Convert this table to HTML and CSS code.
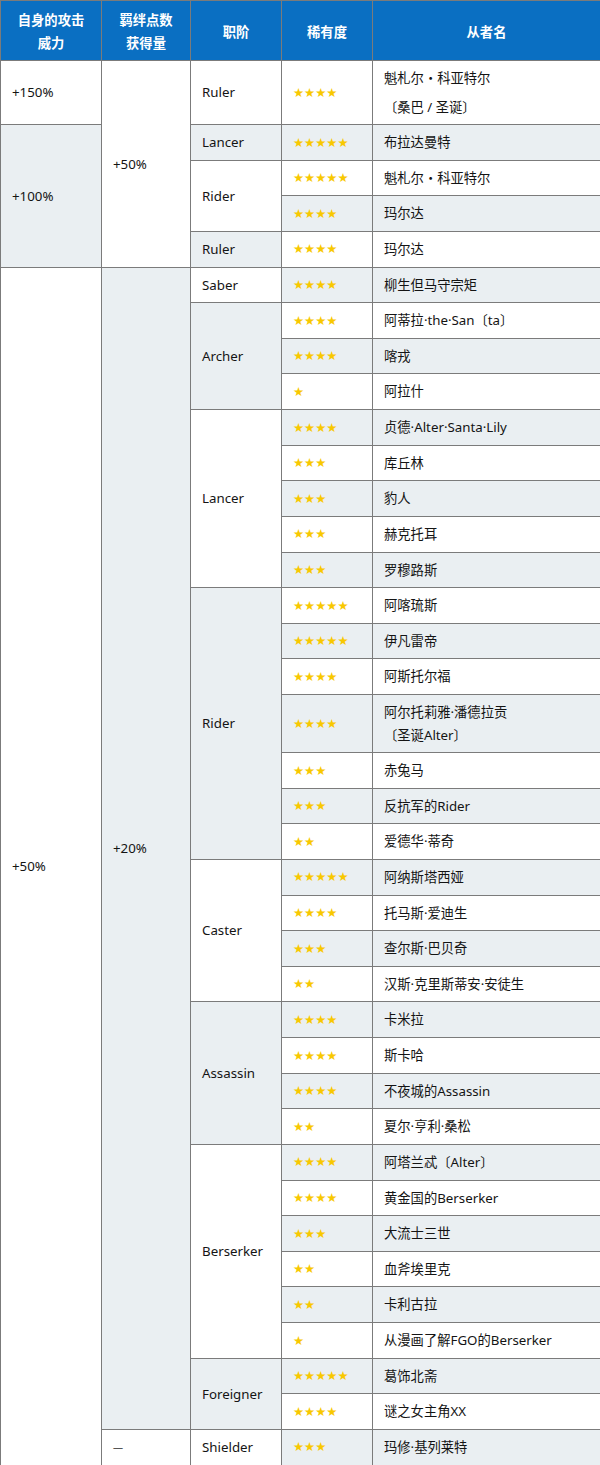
FILE: index.html
```html
<!DOCTYPE html>
<html lang="zh-CN">
<head>
<meta charset="utf-8">
<title>从者表</title>
<link rel="stylesheet" href="styles.css">
</head>
<body>
<table class="tbl">
  <colgroup>
    <col class="c1"><col class="c2"><col class="c3"><col class="c4"><col class="c5">
  </colgroup>
  <thead>
    <tr>
      <th>自身的攻击<br>威力</th>
      <th>羁绊点数<br>获得量</th>
      <th>职阶</th>
      <th>稀有度</th>
      <th>从者名</th>
    </tr>
  </thead>
  <tbody>
    <tr class="tall">
      <td>+150%</td>
      <td rowspan="5">+50%</td>
      <td>Ruler</td>
      <td class="r"><span class="st">★★★★</span></td>
      <td class="n wide">魁札尔・科亚特尔<br>〔桑巴 / 圣诞〕</td>
    </tr>
    <tr>
      <td rowspan="4" class="g">+100%</td>
      <td class="g">Lancer</td>
      <td class="r"><span class="st">★★★★★</span></td>
      <td class="n">布拉达曼特</td>
    </tr>
    <tr>
      <td rowspan="2">Rider</td>
      <td class="r"><span class="st">★★★★★</span></td>
      <td class="n">魁札尔・科亚特尔</td>
    </tr>
    <tr>
      <td class="r"><span class="st">★★★★</span></td>
      <td class="n">玛尔达</td>
    </tr>
    <tr>
      <td class="g">Ruler</td>
      <td class="r"><span class="st">★★★★</span></td>
      <td class="n">玛尔达</td>
    </tr>
    <tr>
      <td rowspan="33">+50%</td>
      <td rowspan="32" class="g">+20%</td>
      <td>Saber</td>
      <td class="r"><span class="st">★★★★</span></td>
      <td class="n">柳生但马守宗矩</td>
    </tr>
    <tr>
      <td rowspan="3" class="g">Archer</td>
      <td class="r"><span class="st">★★★★</span></td>
      <td class="n">阿蒂拉·the·San〔ta〕</td>
    </tr>
    <tr>
      <td class="r"><span class="st">★★★★</span></td>
      <td class="n">喀戎</td>
    </tr>
    <tr>
      <td class="r"><span class="st">★</span></td>
      <td class="n">阿拉什</td>
    </tr>
    <tr>
      <td rowspan="5">Lancer</td>
      <td class="r"><span class="st">★★★★</span></td>
      <td class="n">贞德·Alter·Santa·Lily</td>
    </tr>
    <tr>
      <td class="r"><span class="st">★★★</span></td>
      <td class="n">库丘林</td>
    </tr>
    <tr>
      <td class="r"><span class="st">★★★</span></td>
      <td class="n">豹人</td>
    </tr>
    <tr>
      <td class="r"><span class="st">★★★</span></td>
      <td class="n">赫克托耳</td>
    </tr>
    <tr>
      <td class="r"><span class="st">★★★</span></td>
      <td class="n">罗穆路斯</td>
    </tr>
    <tr>
      <td rowspan="7" class="g">Rider</td>
      <td class="r"><span class="st">★★★★★</span></td>
      <td class="n">阿喀琉斯</td>
    </tr>
    <tr>
      <td class="r"><span class="st">★★★★★</span></td>
      <td class="n">伊凡雷帝</td>
    </tr>
    <tr>
      <td class="r"><span class="st">★★★★</span></td>
      <td class="n">阿斯托尔福</td>
    </tr>
    <tr class="mid">
      <td class="r"><span class="st">★★★★</span></td>
      <td class="n">阿尔托莉雅·潘德拉贡<br>〔圣诞Alter〕</td>
    </tr>
    <tr>
      <td class="r"><span class="st">★★★</span></td>
      <td class="n">赤兔马</td>
    </tr>
    <tr>
      <td class="r"><span class="st">★★★</span></td>
      <td class="n">反抗军的Rider</td>
    </tr>
    <tr>
      <td class="r"><span class="st">★★</span></td>
      <td class="n">爱德华·蒂奇</td>
    </tr>
    <tr>
      <td rowspan="4">Caster</td>
      <td class="r"><span class="st">★★★★★</span></td>
      <td class="n">阿纳斯塔西娅</td>
    </tr>
    <tr>
      <td class="r"><span class="st">★★★★</span></td>
      <td class="n">托马斯·爱迪生</td>
    </tr>
    <tr>
      <td class="r"><span class="st">★★★</span></td>
      <td class="n">查尔斯·巴贝奇</td>
    </tr>
    <tr>
      <td class="r"><span class="st">★★</span></td>
      <td class="n">汉斯·克里斯蒂安·安徒生</td>
    </tr>
    <tr>
      <td rowspan="4" class="g">Assassin</td>
      <td class="r"><span class="st">★★★★</span></td>
      <td class="n">卡米拉</td>
    </tr>
    <tr>
      <td class="r"><span class="st">★★★★</span></td>
      <td class="n">斯卡哈</td>
    </tr>
    <tr>
      <td class="r"><span class="st">★★★★</span></td>
      <td class="n">不夜城的Assassin</td>
    </tr>
    <tr>
      <td class="r"><span class="st">★★</span></td>
      <td class="n">夏尔·亨利·桑松</td>
    </tr>
    <tr>
      <td rowspan="6">Berserker</td>
      <td class="r"><span class="st">★★★★</span></td>
      <td class="n">阿塔兰忒〔Alter〕</td>
    </tr>
    <tr>
      <td class="r"><span class="st">★★★★</span></td>
      <td class="n">黄金国的Berserker</td>
    </tr>
    <tr>
      <td class="r"><span class="st">★★★</span></td>
      <td class="n">大流士三世</td>
    </tr>
    <tr>
      <td class="r"><span class="st">★★</span></td>
      <td class="n">血斧埃里克</td>
    </tr>
    <tr>
      <td class="r"><span class="st">★★</span></td>
      <td class="n">卡利古拉</td>
    </tr>
    <tr>
      <td class="r"><span class="st">★</span></td>
      <td class="n">从漫画了解FGO的Berserker</td>
    </tr>
    <tr>
      <td rowspan="2" class="g">Foreigner</td>
      <td class="r"><span class="st">★★★★★</span></td>
      <td class="n">葛饰北斋</td>
    </tr>
    <tr>
      <td class="r"><span class="st">★★★★</span></td>
      <td class="n">谜之女主角XX</td>
    </tr>
    <tr>
      <td><span class="dash">—</span></td>
      <td>Shielder</td>
      <td class="r"><span class="st">★★★</span></td>
      <td class="n">玛修·基列莱特</td>
    </tr>
  </tbody>
</table>
</body>
</html>
```

FILE: styles.css
```css
html, body {
  margin: 0;
  padding: 0;
  background: #ffffff;
}

.tbl {
  width: 600px;
  table-layout: fixed;
  border-collapse: collapse;
  font-family: "Noto Sans", "Noto Sans CJK SC", sans-serif;
  font-size: 13.3px;
  line-height: 22.4px;
  color: #141414;
}

.c1 { width: 101px; }
.c2 { width: 89px; }
.c3 { width: 91px; }
.c4 { width: 91px; }
.c5 { width: 228px; }

.tbl th,
.tbl td {
  border: 1px solid #7b7b7b;
  vertical-align: middle;
  padding: 0 8px 0 11px;
}

.tbl th {
  height: 60px;
  box-sizing: border-box;
  padding: 3px 4px 0;
  background: #0a6fc2;
  color: #ffffff;
  font-weight: bold;
  text-align: center;
  line-height: 22.6px;
}

.tbl tbody tr {
  height: 35.64px;
}

.tbl tbody tr.tall {
  height: 64px;
}

.tbl tbody tr.mid {
  height: 58px;
}

.tbl td.g,
.tbl tbody tr:nth-child(even) td.r,
.tbl tbody tr:nth-child(even) td.n {
  background: #eaeff2;
}

.tbl td.wide {
  line-height: 28.4px;
}

.st {
  font-family: "DejaVu Sans", sans-serif;
  font-size: 12.4px;
  color: #f8c800;
  letter-spacing: 0;
}

.dash {
  display: inline-block;
  font-size: 10px;
  color: #555555;
}
```
